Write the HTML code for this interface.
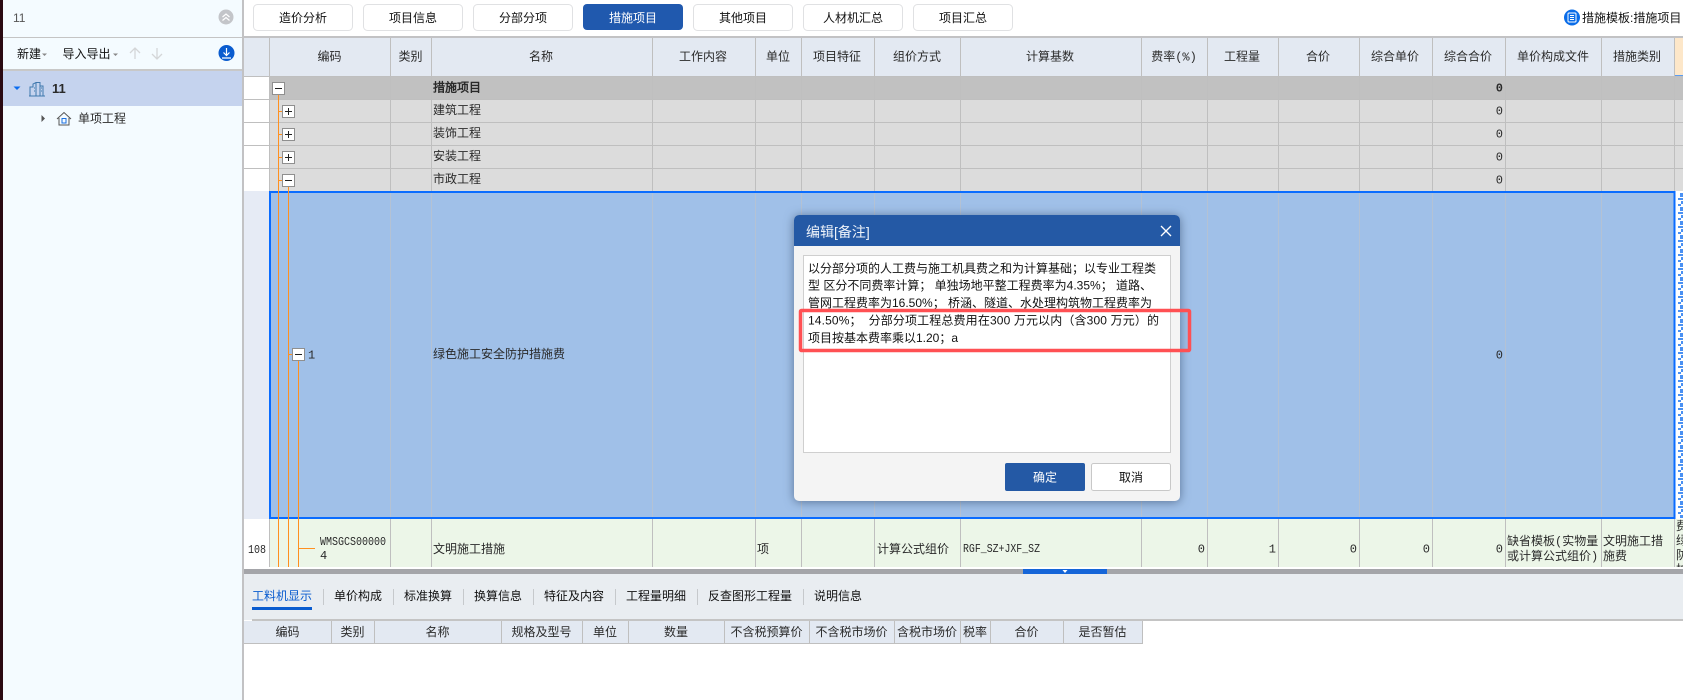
<!DOCTYPE html>
<html><head><meta charset="utf-8"><style>
html,body{margin:0;padding:0;width:1683px;height:700px;overflow:hidden;background:#fff}
svg{display:block}
text{font-size:12px;fill:#2a2a2a}
.u{font-family:"Liberation Sans","Noto Sans CJK SC",sans-serif}
.g{font-family:"Liberation Mono","WenQuanYi Zen Hei",monospace}
.m{text-anchor:middle}
.e{text-anchor:end}
.b{fill:#fff;stroke:#8f8f8f;stroke-width:1}
.o{stroke:#ff9020;stroke-width:1;fill:none}
.k{fill:#111}
</style></head><body>
<svg width="1683" height="700" viewBox="0 0 1683 700" xmlns="http://www.w3.org/2000/svg">
<defs>
<pattern id="sel" x="1678" y="193" width="5" height="14" patternUnits="userSpaceOnUse">
<rect width="5" height="14" fill="#fff"/><rect x="2" y="0" width="3" height="4" fill="#4a90f2"/><rect x="0" y="5" width="5" height="2" fill="#4a90f2"/><rect x="3" y="8" width="2" height="3" fill="#4a90f2"/><rect x="0" y="11" width="3" height="2" fill="#4a90f2"/>
</pattern>
<clipPath id="rc"><rect x="1675" y="519" width="8" height="48"/></clipPath>
<clipPath id="tr"><rect x="0" y="0" width="1683" height="36"/></clipPath>
</defs>

<!-- sidebar -->
<rect x="0" y="0" width="243" height="700" fill="#f4fbff"/>
<rect x="0" y="0" width="3" height="700" fill="#2a0a12"/>
<rect x="242" y="0" width="2" height="700" fill="#c2c2c4"/>
<rect x="3" y="37" width="239" height="1" fill="#c4c4c4"/>
<rect x="3" y="69" width="239" height="2" fill="#c8c8c8"/>
<rect x="3" y="71" width="239" height="35" fill="#c5d3ee"/>
<text class="u" x="13" y="22" style="fill:#555">11</text>
<circle cx="226" cy="17" r="7.500" fill="#c3c5c9"/>
<path d="M222.500 17l3.500-3 3.500 3M222.500 20.500l3.500-3 3.500 3" fill="none" stroke="#fff" stroke-width="1.200"/>
<text class="u k" x="17" y="58">新建</text>
<path d="M42 53.500h5l-2.500 2.500z" fill="#888"/>
<text class="u k" x="62.500" y="58">导入导出</text>
<path d="M113 53.500h5l-2.500 2.500z" fill="#888"/>
<path d="M135 59V48.500M130 53l5-5 5 5M157 48v10.500M152 54l5 5 5-5" fill="none" stroke="#d4d6d8" stroke-width="1.300"/>
<circle cx="226.500" cy="53" r="8" fill="#0a5ccf"/>
<path d="M226.500 48v7M223.500 52.500l3 3 3-3M222 58h9" fill="none" stroke="#fff" stroke-width="1.200"/>
<path d="M13.500 86.500h7l-3.500 3.500z" fill="#0a6cf0"/>
<path d="M30 96v-9h3v-3l3-1.500h4v3.500h3v10M29 96h16M36 83v13M40 83v13M34 88h1M34 91h1M41 88h1M41 91h1" fill="none" stroke="#3f78ad" stroke-width="1"/>
<text class="u" x="52" y="93" style="font-weight:700;font-size:13px">11</text>
<path d="M41.500 115l3.500 3.500-3.500 3.500z" fill="#555"/>
<path d="M57 119l7-6.500 7 6.500M59 118v7h10v-7" fill="none" stroke="#555" stroke-width="1"/>
<rect x="62" y="118.500" width="4" height="4.500" fill="none" stroke="#1a6fe0" stroke-width="1"/>
<text class="u" x="78" y="122.500">单项工程</text>

<!-- top bar buttons -->
<g fill="#fff" stroke="#e0e1e3">
<rect x="253.500" y="4.500" width="99" height="26" rx="4"/>
<rect x="363.500" y="4.500" width="99" height="26" rx="4"/>
<rect x="473.500" y="4.500" width="99" height="26" rx="4"/>
<rect x="693.500" y="4.500" width="99" height="26" rx="4"/>
<rect x="803.500" y="4.500" width="99" height="26" rx="4"/>
<rect x="913.500" y="4.500" width="99" height="26" rx="4"/>
</g>
<rect x="583" y="4" width="100" height="26" rx="4" fill="#2059ae"/>
<text class="u m k" x="303" y="22">造价分析</text>
<text class="u m k" x="413" y="22">项目信息</text>
<text class="u m k" x="523" y="22">分部分项</text>
<text class="u m" x="633" y="22" style="fill:#fff">措施项目</text>
<text class="u m k" x="743" y="22">其他项目</text>
<text class="u m k" x="853" y="22">人材机汇总</text>
<text class="u m k" x="963" y="22">项目汇总</text>
<circle cx="1572" cy="17.500" r="8" fill="#0a6ce8"/>
<rect x="1568" y="13" width="8" height="9" rx="1" fill="none" stroke="#fff"/>
<path d="M1570 15.500h4M1570 17.500h4M1570 19.500h4" stroke="#fff" stroke-width="1"/>
<text class="u k" x="1582" y="22" clip-path="url(#tr)">措施模板:措施项目</text>

<!-- grid top line -->
<rect x="244" y="36" width="1439" height="2" fill="#c2c2c4"/>

<!-- grid backgrounds -->
<rect x="244" y="38" width="1439" height="38" fill="#e3e9f2"/>
<rect x="1674" y="38" width="9" height="37" fill="#fde7c9"/>
<rect x="1674" y="75" width="9" height="2" fill="#5b9cf0"/>
<rect x="244" y="76" width="25" height="115" fill="#fff"/>
<rect x="269" y="76" width="1414" height="23" fill="#c1c1c1"/>
<rect x="269" y="99" width="1414" height="92" fill="#dcdcdc"/>
<rect x="244" y="191" width="25" height="328" fill="#e6ebf5"/>
<rect x="269" y="191" width="1405" height="328" fill="#a0c0e8"/>
<rect x="1674" y="192" width="9" height="326" fill="#fff"/>
<rect x="1678" y="192" width="5" height="326" fill="url(#sel)"/>
<rect x="244" y="519" width="25" height="48" fill="#fff"/>
<rect x="269" y="519" width="1414" height="48" fill="#ecf6e8"/>

<!-- grid lines -->
<g fill="#bfbfbf">
<rect x="269" y="38" width="1" height="153"/><rect x="390" y="38" width="1" height="153"/><rect x="431" y="38" width="1" height="153"/><rect x="652" y="38" width="1" height="153"/><rect x="755" y="38" width="1" height="153"/><rect x="801" y="38" width="1" height="153"/><rect x="874" y="38" width="1" height="153"/><rect x="960" y="38" width="1" height="153"/><rect x="1141" y="38" width="1" height="153"/><rect x="1207" y="38" width="1" height="153"/><rect x="1278" y="38" width="1" height="153"/><rect x="1359" y="38" width="1" height="153"/><rect x="1432" y="38" width="1" height="153"/><rect x="1505" y="38" width="1" height="153"/><rect x="1601" y="38" width="1" height="153"/><rect x="1674" y="38" width="1" height="153"/>
<rect x="269" y="519" width="1" height="48"/><rect x="390" y="519" width="1" height="48"/><rect x="431" y="519" width="1" height="48"/><rect x="652" y="519" width="1" height="48"/><rect x="755" y="519" width="1" height="48"/><rect x="801" y="519" width="1" height="48"/><rect x="874" y="519" width="1" height="48"/><rect x="960" y="519" width="1" height="48"/><rect x="1141" y="519" width="1" height="48"/><rect x="1207" y="519" width="1" height="48"/><rect x="1278" y="519" width="1" height="48"/><rect x="1359" y="519" width="1" height="48"/><rect x="1432" y="519" width="1" height="48"/><rect x="1505" y="519" width="1" height="48"/><rect x="1601" y="519" width="1" height="48"/><rect x="1674" y="519" width="1" height="48"/>
<rect x="244" y="76" width="1439" height="1"/>
<rect x="244" y="99" width="1439" height="1"/>
<rect x="244" y="122" width="1439" height="1"/>
<rect x="244" y="145" width="1439" height="1"/>
<rect x="244" y="168" width="1439" height="1"/>
</g>
<g fill="#b4c2d4">
<rect x="390" y="192" width="1" height="326"/><rect x="431" y="192" width="1" height="326"/><rect x="652" y="192" width="1" height="326"/><rect x="755" y="192" width="1" height="326"/><rect x="801" y="192" width="1" height="326"/><rect x="874" y="192" width="1" height="326"/><rect x="960" y="192" width="1" height="326"/><rect x="1141" y="192" width="1" height="326"/><rect x="1207" y="192" width="1" height="326"/><rect x="1278" y="192" width="1" height="326"/><rect x="1359" y="192" width="1" height="326"/><rect x="1432" y="192" width="1" height="326"/><rect x="1505" y="192" width="1" height="326"/><rect x="1601" y="192" width="1" height="326"/>
</g>

<!-- selected border -->
<rect x="270" y="192" width="1404.500" height="326" fill="none" stroke="#0a6cff" stroke-width="2"/>

<!-- tree lines -->
<path class="o" d="M278.500 94V567M288.500 186V567M298.500 361V567M278 111.500h4M278 134.500h4M278 157.500h4M278 180.500h4M288 354.500h4M298 548.500h17"/>
<rect class="b" x="272.500" y="82.500" width="12" height="12"/><path d="M275 88.500h7" stroke="#222"/>
<rect class="b" x="282.500" y="105.500" width="12" height="12"/><path d="M285 111.500h7M288.500 108v7" stroke="#222"/>
<rect class="b" x="282.500" y="128.500" width="12" height="12"/><path d="M285 134.500h7M288.500 131v7" stroke="#222"/>
<rect class="b" x="282.500" y="151.500" width="12" height="12"/><path d="M285 157.500h7M288.500 154v7" stroke="#222"/>
<rect class="b" x="282.500" y="174.500" width="12" height="12"/><path d="M285 180.500h7" stroke="#222"/>
<rect class="b" x="292.500" y="348.500" width="12" height="12"/><path d="M295 354.500h7" stroke="#222"/>

<!-- grid headers -->
<text class="g m" x="329.500" y="60.500">编码</text>
<text class="g m" x="410.500" y="60.500">类别</text>
<text class="g m" x="541" y="60.500">名称</text>
<text class="g m" x="703" y="60.500">工作内容</text>
<text class="g m" x="778" y="60.500">单位</text>
<text class="g m" x="837" y="60.500">项目特征</text>
<text class="g m" x="917" y="60.500">组价方式</text>
<text class="g m" x="1050" y="60.500">计算基数</text>
<text class="g m" x="1174" y="60.500">费率(%)</text>
<text class="g m" x="1242" y="60.500">工程量</text>
<text class="g m" x="1318" y="60.500">合价</text>
<text class="g m" x="1395" y="60.500">综合单价</text>
<text class="g m" x="1468" y="60.500">综合合价</text>
<text class="g m" x="1553" y="60.500">单价构成文件</text>
<text class="g m" x="1637" y="60.500">措施类别</text>

<!-- grid rows -->
<text class="g" x="433" y="91.500" style="font-weight:700">措施项目</text>
<text class="g" x="433" y="114">建筑工程</text>
<text class="g" x="433" y="137">装饰工程</text>
<text class="g" x="433" y="160">安装工程</text>
<text class="g" x="433" y="183">市政工程</text>
<text class="g e" x="1503" y="91.500" style="font-weight:700">0</text>
<text class="g e" x="1503" y="114.500">0</text>
<text class="g e" x="1503" y="137.500">0</text>
<text class="g e" x="1503" y="160.500">0</text>
<text class="g e" x="1503" y="183.500">0</text>
<text class="g" x="308" y="358.500">1</text>
<text class="g" x="433" y="358">绿色施工安全防护措施费</text>
<text class="g e" x="1503" y="358.500">0</text>

<text class="g" x="248" y="553" textLength="18" lengthAdjust="spacingAndGlyphs">108</text>
<text class="g" x="320" y="545" textLength="66" lengthAdjust="spacingAndGlyphs">WMSGCS00000</text>
<text class="g" x="320" y="559">4</text>
<text class="g" x="433" y="553">文明施工措施</text>
<text class="g" x="757" y="553">项</text>
<text class="g" x="877" y="553">计算公式组价</text>
<text class="g" x="963" y="552" textLength="77" lengthAdjust="spacingAndGlyphs">RGF_SZ+JXF_SZ</text>
<text class="g e" x="1205" y="552.500">0</text>
<text class="g e" x="1276" y="552.500">1</text>
<text class="g e" x="1357" y="552.500">0</text>
<text class="g e" x="1430" y="552.500">0</text>
<text class="g e" x="1503" y="552.500">0</text>
<text class="g" x="1507" y="545">缺省模板(实物量</text>
<text class="g" x="1507" y="560">或计算公式组价)</text>
<text class="g" x="1603" y="545">文明施工措</text>
<text class="g" x="1603" y="560">施费</text>
<g clip-path="url(#rc)">
<text class="g" x="1676" y="530">费</text>
<text class="g" x="1676" y="544.500">绿</text>
<text class="g" x="1676" y="559">防</text>
<text class="g" x="1676" y="573.500">护</text>
</g>

<!-- splitter -->
<rect x="244" y="567" width="1439" height="2" fill="#fff"/>
<rect x="244" y="569" width="1439" height="5" fill="#a4a5a9"/>
<rect x="1023" y="569" width="84" height="5" fill="#1565d8"/>
<path d="M1062.500 570h5l-2.500 3z" fill="#fff"/>

<!-- bottom tabs -->
<rect x="244" y="574" width="1439" height="46" fill="#e9edf1"/>
<rect x="252" y="619" width="1431" height="2" fill="#c4c4c4"/>
<rect x="252" y="607" width="60" height="3" fill="#0a5ccf"/>
<g fill="#c6c9cc">
<rect x="323" y="589" width="1" height="16"/><rect x="393" y="589" width="1" height="16"/><rect x="463" y="589" width="1" height="16"/><rect x="533" y="589" width="1" height="16"/><rect x="615" y="589" width="1" height="16"/><rect x="697" y="589" width="1" height="16"/><rect x="803" y="589" width="1" height="16"/>
</g>
<text class="u" x="252" y="600" style="fill:#0a5ccf">工料机显示</text>
<text class="u k" x="334" y="600">单价构成</text>
<text class="u k" x="404" y="600">标准换算</text>
<text class="u k" x="474" y="600">换算信息</text>
<text class="u k" x="544" y="600">特征及内容</text>
<text class="u k" x="626" y="600">工程量明细</text>
<text class="u k" x="708" y="600">反查图形工程量</text>
<text class="u k" x="814" y="600">说明信息</text>

<!-- bottom grid -->
<rect x="244" y="621" width="899" height="22" fill="#e3e9f2"/>
<rect x="244" y="643" width="899" height="1" fill="#bfbfbf"/>
<g fill="#bfbfbf">
<rect x="331" y="621" width="1" height="22"/><rect x="374" y="621" width="1" height="22"/><rect x="501" y="621" width="1" height="22"/><rect x="582" y="621" width="1" height="22"/><rect x="628" y="621" width="1" height="22"/><rect x="724" y="621" width="1" height="22"/><rect x="809" y="621" width="1" height="22"/><rect x="894" y="621" width="1" height="22"/><rect x="960" y="621" width="1" height="22"/><rect x="990" y="621" width="1" height="22"/><rect x="1063" y="621" width="1" height="22"/><rect x="1142" y="621" width="1" height="22"/>
</g>
<text class="g m" x="287.500" y="636">编码</text>
<text class="g m" x="352.500" y="636">类别</text>
<text class="g m" x="437.500" y="636">名称</text>
<text class="g m" x="541.500" y="636">规格及型号</text>
<text class="g m" x="605" y="636">单位</text>
<text class="g m" x="676" y="636">数量</text>
<text class="g m" x="766.500" y="636">不含税预算价</text>
<text class="g m" x="851.500" y="636">不含税市场价</text>
<text class="g m" x="927" y="636">含税市场价</text>
<text class="g m" x="975" y="636">税率</text>
<text class="g m" x="1026.500" y="636">合价</text>
<text class="g m" x="1102.500" y="636">是否暂估</text>

<!-- dialog -->
<rect x="794" y="215" width="386" height="286" rx="5" fill="#f4f4f4" style="filter:drop-shadow(0 1px 5px rgba(30,50,80,.55))"/>
<path d="M794 246V220a5 5 0 0 1 5-5h376a5 5 0 0 1 5 5v26z" fill="#2459a5"/>
<text class="u" x="806" y="237" style="font-size:14px;fill:#eef3fa">编辑[备注]</text>
<path d="M1161 226l10 10M1171 226l-10 10" stroke="#fff" stroke-width="1.300" fill="none"/>
<rect x="803.500" y="255.500" width="367" height="197" fill="#fff" stroke="#cfcfcf"/>
<text class="u k" x="808" y="272.500">以分部分项的人工费与施工机具费之和为计算基础；以专业工程类</text>
<text class="u k" x="808" y="289.500">型 区分不同费率计算； 单独场地平整工程费率为4.35%； 道路、</text>
<text class="u k" x="808" y="307">管网工程费率为16.50%； 桥涵、隧道、水处理构筑物工程费率为</text>
<text class="u k" x="808" y="324.500" textLength="351">14.50%；&#160;&#160;分部分项工程总费用在300 万元以内（含300 万元）的</text>
<text class="u k" x="808" y="342">项目按基本费率乘以1.20；a</text>
<rect x="800.500" y="310.500" width="389" height="40" fill="none" stroke="#ff5053" stroke-width="3.500" rx="1"/>
<rect x="1005" y="463" width="80" height="28" rx="2" fill="#2459a5"/>
<text class="u m" x="1045" y="481.500" style="fill:#fff">确定</text>
<rect x="1091.500" y="463.500" width="79" height="27" rx="2" fill="#fff" stroke="#c8c8c8"/>
<text class="u m k" x="1131" y="481.500">取消</text>
</svg>
</body></html>
